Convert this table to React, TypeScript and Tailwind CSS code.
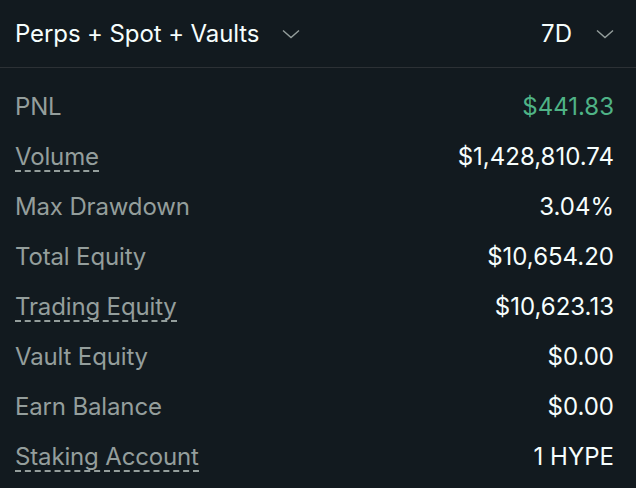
import React from "react";

const Chevron = () => (
  <svg width="18" height="10" viewBox="0 0 18 10" fill="none" className="text-[#949e9c]">
    <path d="M1 1.5L9 8.5L17 1.5" stroke="currentColor" strokeWidth="1.4" />
  </svg>
);

const rows: { label: string; value: string; dashed?: boolean; green?: boolean }[] = [
  { label: "PNL", value: "$441.83", green: true },
  { label: "Volume", value: "$1,428,810.74", dashed: true },
  { label: "Max Drawdown", value: "3.04%" },
  { label: "Total Equity", value: "$10,654.20" },
  { label: "Trading Equity", value: "$10,623.13", dashed: true },
  { label: "Vault Equity", value: "$0.00" },
  { label: "Earn Balance", value: "$0.00" },
  { label: "Staking Account", value: "1 HYPE", dashed: true },
];

export default function App() {
  return (
    <div
      className="w-[636px] h-[488px] bg-[#121a1f] overflow-hidden text-white"
      style={{ fontFamily: "Inter, 'Noto Sans', sans-serif" }}
    >
      <div className="h-[68px] flex items-center justify-between pl-[15px] pr-[22px] border-b border-[#2c3135]">
        <div className="flex items-center gap-[23px]">
          <span className="text-[24px] leading-none text-[#f6fefd] tracking-[-0.1px]">Perps + Spot + Vaults</span>
          <Chevron />
        </div>
        <div className="flex items-center gap-[24px]">
          <span className="text-[24px] leading-none text-[#f6fefd]">7D</span>
          <Chevron />
        </div>
      </div>
      <div className="flex flex-col pl-[15px] pr-[22px] pt-[26px]">
        {rows.map((r) => (
          <div key={r.label} className="h-[50px] flex justify-between items-start">
            <span
              className={
                "text-[24px] leading-[26px] tracking-[-0.15px] text-[#949e9c]" +
                (r.dashed ? " border-b-2 border-dashed border-[#949e9c]" : "")
              }
            >
              {r.label}
            </span>
            <span
              className={
                "text-[24px] leading-[26px] " + (r.green ? "text-[#4fb386]" : "text-[#f6fefd]")
              }
            >
              {r.value}
            </span>
          </div>
        ))}
      </div>
    </div>
  );
}
